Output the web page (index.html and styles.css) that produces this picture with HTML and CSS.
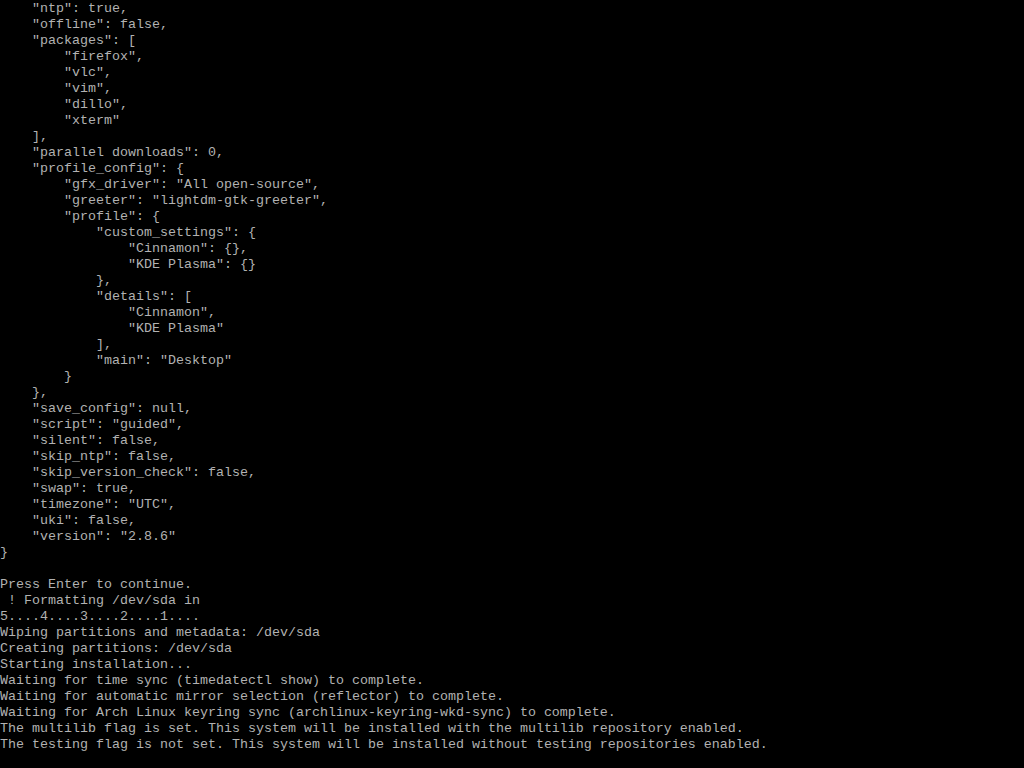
FILE: index.html
```html
<!DOCTYPE html>
<html>
<head>
<meta charset="utf-8">
<link rel="stylesheet" href="styles.css">
</head>
<body>
<pre class="console">    "ntp": true,
    "offline": false,
    "packages": [
        "firefox",
        "vlc",
        "vim",
        "dillo",
        "xterm"
    ],
    "parallel downloads": 0,
    "profile_config": {
        "gfx_driver": "All open-source",
        "greeter": "lightdm-gtk-greeter",
        "profile": {
            "custom_settings": {
                "Cinnamon": {},
                "KDE Plasma": {}
            },
            "details": [
                "Cinnamon",
                "KDE Plasma"
            ],
            "main": "Desktop"
        }
    },
    "save_config": null,
    "script": "guided",
    "silent": false,
    "skip_ntp": false,
    "skip_version_check": false,
    "swap": true,
    "timezone": "UTC",
    "uki": false,
    "version": "2.8.6"
}

Press Enter to continue.
 ! Formatting /dev/sda in
5....4....3....2....1....
Wiping partitions and metadata: /dev/sda
Creating partitions: /dev/sda
Starting installation...
Waiting for time sync (timedatectl show) to complete.
Waiting for automatic mirror selection (reflector) to complete.
Waiting for Arch Linux keyring sync (archlinux-keyring-wkd-sync) to complete.
The multilib flag is set. This system will be installed with the multilib repository enabled.
The testing flag is not set. This system will be installed without testing repositories enabled.</pre>
</body>
</html>
```

FILE: styles.css
```css
html, body {
  margin: 0;
  padding: 0;
  background: #000;
  width: 1024px;
  height: 768px;
  overflow: hidden;
}

.console {
  margin: 0;
  padding: 1px 0 0 0;
  color: #b2b2b2;
  font-family: "Liberation Mono", "DejaVu Sans Mono", monospace;
  font-size: 13.333px;
  line-height: 16px;
  white-space: pre;
}
```
